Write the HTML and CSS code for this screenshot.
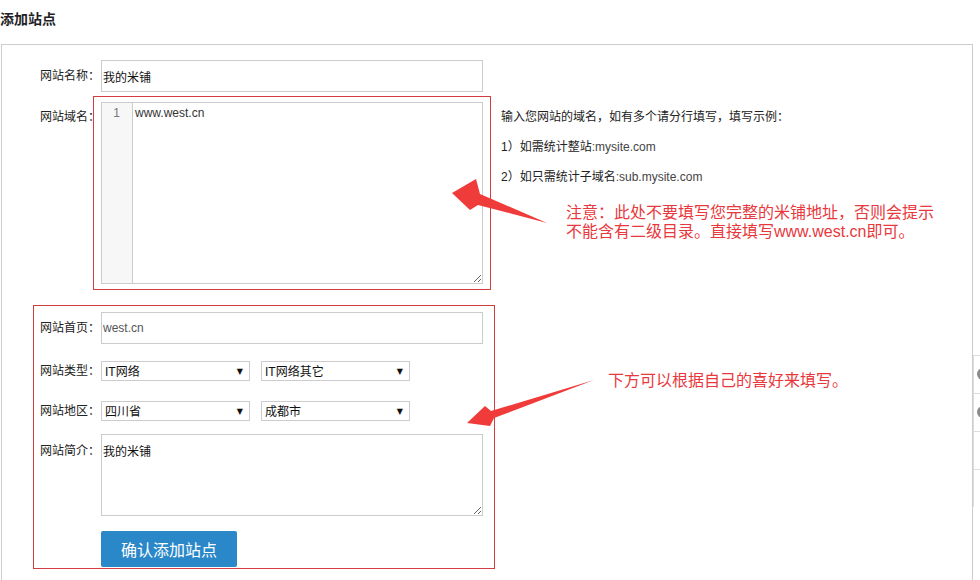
FILE: index.html
```html
<!DOCTYPE html>
<html lang="zh-CN">
<head>
    <meta charset="UTF-8">
    <title>添加站点</title>
    <link rel="stylesheet" href="styles.css">
</head>
<body>

<div class="page">
    <h2 class="title">添加站点</h2>

    <div class="panel">
        <div class="row row-name">
            <label class="label" for="siteName">网站名称：</label>
            <input class="text" id="siteName" type="text" value="我的米铺">
        </div>

        <div class="row row-domain">
            <label class="label label-domain" for="siteDomain">网站域名：</label>
            <div class="editor">
                <div class="gutter">1</div>
                <textarea class="code" id="siteDomain">www.west.cn</textarea>
            </div>
            <div class="help">
                <p>输入您网站的域名，如有多个请分行填写，填写示例：</p>
                <p>1）如需统计整站<span class="latin">:mysite.com</span></p>
                <p>2）如只需统计子域名<span class="latin">:sub.mysite.com</span></p>
            </div>
        </div>

        <div class="row row-home">
            <label class="label" for="siteHome">网站首页：</label>
            <input class="text text-muted" id="siteHome" type="text" value="west.cn">
        </div>

        <div class="row row-select">
            <label class="label">网站类型：</label>
            <div class="select">
                <select><option>IT网络</option></select>
                <span class="caret">▼</span>
            </div>
            <div class="select">
                <select><option>IT网络其它</option></select>
                <span class="caret">▼</span>
            </div>
        </div>

        <div class="row row-select row-area">
            <label class="label">网站地区：</label>
            <div class="select">
                <select><option>四川省</option></select>
                <span class="caret">▼</span>
            </div>
            <div class="select">
                <select><option>成都市</option></select>
                <span class="caret">▼</span>
            </div>
        </div>

        <div class="row row-intro">
            <label class="label label-intro" for="siteIntro">网站简介：</label>
            <textarea class="intro" id="siteIntro">我的米铺</textarea>
        </div>

        <div class="row row-submit">
            <button class="btn-submit" type="button">确认添加站点</button>
        </div>
    </div>

    <!-- annotations drawn over the screenshot -->
    <div class="mark mark-domain"></div>
    <div class="mark mark-extra"></div>
    <p class="note note-domain">注意：此处不要填写您完整的米铺地址，否则会提示<br>不能含有二级目录。直接填写www.west.cn即可。</p>
    <p class="note note-extra">下方可以根据自己的喜好来填写。</p>
    <svg class="arrows" width="980" height="580" viewBox="0 0 980 580">
        <polygon points="452,193 476,179 480,194 547,223 478,205 470,210" fill="#f03b3b"/>
        <polygon points="467,423 485,406 491,411 594,380 494,418 490,426" fill="#f03b3b"/>
    </svg>
</div>

<div class="side-tools">
    <div class="tool"><span class="tool-icon"></span></div>
    <div class="tool"><span class="tool-icon"></span></div>
    <div class="tool"></div>
    <div class="tool"></div>
</div>

</body>
</html>
```

FILE: styles.css
```css
body {
    margin: 0;
    font-family: "Liberation Sans", "Noto Sans CJK SC", sans-serif;
    font-size: 12px;
    color: #333;
    background-color: #fff;
    overflow: hidden;
}
.page {
    position: relative;
    width: 980px;
    height: 580px;
    overflow: hidden;
}
.title {
    margin: 0;
    padding-top: 9px;
    font-size: 14px;
    line-height: 20px;
    font-weight: bold;
    color: #221e25;
}
.panel {
    box-sizing: border-box;
    width: 972px;
    height: 600px;
    margin: 15px 0 0 1px;
    padding: 15px 0 0 31px;
    border: 1px solid #ccc;
}
.row {
    display: flex;
    align-items: center;
}
.label {
    flex-shrink: 0;
    width: 67px;
    margin-right: 1px;
    text-align: right;
    line-height: 16px;
    color: #222;
}
.text {
    box-sizing: border-box;
    width: 382px;
    height: 32px;
    padding: 0 1px;
    border: 1px solid #ccc;
    font-family: inherit;
    font-size: 12px;
    color: #111;
    outline: none;
}
.text-muted {
    color: #555;
}
.row-name {
    margin-bottom: 10px;
}
.row-domain {
    align-items: flex-start;
    margin-bottom: 28px;
}
.label-domain {
    padding-top: 7px;
}
.editor {
    box-sizing: border-box;
    display: flex;
    width: 382px;
    height: 182px;
    border: 1px solid #ccc;
}
.gutter {
    box-sizing: border-box;
    width: 31px;
    padding: 2px 12px 0 0;
    border-right: 1px solid #ccc;
    background-color: #f7f7f7;
    text-align: right;
    line-height: 16px;
    color: #777;
}
.code {
    flex: 1;
    margin: 0;
    padding: 2px 2px;
    border: none;
    font-family: inherit;
    font-size: 12px;
    line-height: 16px;
    color: #333;
    resize: both;
    outline: none;
}
.help {
    margin-left: 18px;
    padding-top: 7px;
}
.help p {
    margin: 0 0 14px;
    line-height: 16px;
    color: #222;
}
.help .latin {
    color: #444;
}
.row-home {
    margin-bottom: 17px;
}
.row-select {
    margin-bottom: 20px;
}
.row-area {
    margin-bottom: 13px;
}
.select {
    box-sizing: border-box;
    display: flex;
    align-items: center;
    width: 149px;
    height: 20px;
    margin-right: 11px;
    border: 1px solid #ccc;
    background-color: #fff;
}
.select select {
    flex: 1;
    min-width: 0;
    height: 18px;
    padding: 1px 0 0 3px;
    border: none;
    background: transparent;
    font-family: inherit;
    font-size: 12px;
    color: #111;
    appearance: none;
    -webkit-appearance: none;
    outline: none;
}
.caret {
    margin-right: 6px;
    font-family: "DejaVu Sans", sans-serif;
    font-size: 8px;
    color: #111;
}
.row-intro {
    align-items: flex-start;
    margin-bottom: 15px;
}
.label-intro {
    padding-top: 9px;
}
.intro {
    box-sizing: border-box;
    width: 382px;
    height: 82px;
    margin: 0;
    padding: 9px 1px;
    border: 1px solid #ccc;
    font-family: inherit;
    font-size: 12px;
    line-height: 16px;
    color: #111;
    resize: both;
    outline: none;
}
.btn-submit {
    width: 136px;
    height: 36px;
    margin-left: 68px;
    border: none;
    border-radius: 2px;
    background-color: #2a88c9;
    color: #fff;
    font-family: inherit;
    font-size: 16px;
    cursor: pointer;
}
.mark {
    position: absolute;
    box-sizing: border-box;
    border: 1px solid #d43c40;
    pointer-events: none;
}
.mark-domain {
    left: 93px;
    top: 96px;
    width: 398px;
    height: 194px;
}
.mark-extra {
    left: 33px;
    top: 305px;
    width: 462px;
    height: 264px;
}
.note {
    position: absolute;
    margin: 0;
    font-size: 16px;
    line-height: 19px;
    color: #e8383d;
    white-space: nowrap;
}
.note-domain {
    left: 566px;
    top: 203px;
}
.note-extra {
    left: 608px;
    top: 371px;
}
.arrows {
    position: absolute;
    left: 0;
    top: 0;
    pointer-events: none;
}
.side-tools {
    position: fixed;
    left: 973px;
    top: 355px;
    width: 40px;
    border-left: 1px solid #ddd;
}
.tool {
    position: relative;
    height: 37px;
    border-top: 1px solid #ddd;
    background-color: #fff;
}
.tool-icon {
    position: absolute;
    left: 3px;
    top: 12px;
    width: 12px;
    height: 12px;
    border-radius: 50%;
    background-color: #8a8a8a;
}
```
